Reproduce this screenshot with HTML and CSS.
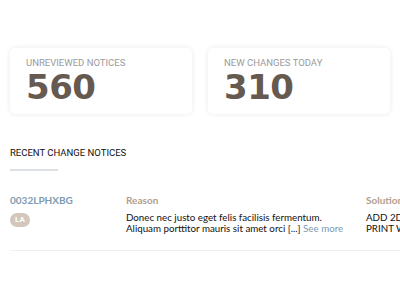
FILE: index.html
```html
<!DOCTYPE html>
<html lang="en">
<head>
    <meta charset="UTF-8">
    <title>Change Notices</title>
    <link rel="stylesheet" href="styles.css">
</head>
<body>
    <div class="page">
        <div class="stats">
            <div class="stat-card">
                <div class="stat-label">UNREVIEWED NOTICES</div>
                <div class="stat-value">560</div>
            </div>
            <div class="stat-card">
                <div class="stat-label">NEW CHANGES TODAY</div>
                <div class="stat-value">310</div>
            </div>
        </div>

        <div class="section">
            <h4 class="section-title">RECENT CHANGE NOTICES</h4>
            <div class="section-bar"></div>
        </div>

        <div class="notice-row">
            <div class="notice-id-col">
                <div class="notice-id">0032LPHXBG</div>
                <span class="badge">LA</span>
            </div>
            <div class="notice-reason">
                <div class="col-head">Reason</div>
                <div class="col-text">Donec nec justo eget felis facilisis fermentum. Aliquam porttitor mauris sit amet orci [...] <span class="see-more">See more</span></div>
            </div>
            <div class="notice-solution">
                <div class="col-head">Solution</div>
                <div class="col-text">ADD 2D PRINT WITH</div>
            </div>
        </div>
    </div>
</body>
</html>
```

FILE: styles.css
```css
* {
    margin: 0;
    padding: 0;
    box-sizing: border-box;
}

body {
    background-color: #ffffff;
    font-family: 'Roboto', 'Liberation Sans', sans-serif;
    overflow: hidden;
    width: 400px;
    height: 300px;
}

.page {
    padding: 48px 0 0 10px;
}

.stats {
    display: flex;
    gap: 16px;
    width: 380px;
}

.stat-card {
    flex: 1;
    height: 66px;
    padding: 9px 16px 0;
    background-color: #fff;
    border-radius: 5px;
    box-shadow: 0px 0px 4px 1px #f0f0f0;
}

.stat-label {
    font-size: 9.5px;
    color: #9a9a9a;
    line-height: 12px;
}

.stat-value {
    font-family: 'DejaVu Sans', 'Liberation Sans', sans-serif;
    font-weight: 700;
    font-size: 34px;
    line-height: 34px;
    letter-spacing: -0.5px;
    color: #66594f;
    margin-top: 1px;
}

.section {
    margin-top: 33px;
}

.section-title {
    font-size: 9.5px;
    font-weight: 400;
    color: #111;
    line-height: 12px;
}

.section-bar {
    width: 48px;
    height: 2px;
    background-color: #dde1e5;
    margin-top: 10px;
}

.notice-row {
    display: flex;
    margin-top: 23px;
    padding-bottom: 16px;
    border-bottom: 1px solid #eef1f1;
    width: 390px;
    overflow: hidden;
}

.notice-id-col {
    width: 116px;
    flex-shrink: 0;
}

.notice-id {
    font-family: 'Lato', 'Liberation Sans', sans-serif;
    font-weight: 700;
    font-size: 10px;
    color: #7d9bb0;
    line-height: 12px;
}

.badge {
    display: inline-block;
    margin-top: 7px;
    width: 20px;
    height: 14px;
    border-radius: 7px;
    background-color: #d3c7bc;
    color: #fff;
    font-size: 8px;
    font-weight: 700;
    line-height: 14px;
    text-align: center;
}

.notice-reason {
    width: 240px;
    flex-shrink: 0;
}

.notice-solution {
    width: 62px;
    flex-shrink: 0;
}

.col-head {
    font-family: 'Lato', 'Liberation Sans', sans-serif;
    font-weight: 700;
    font-size: 10px;
    color: #b39e8b;
    line-height: 12px;
    white-space: nowrap;
}

.col-text {
    font-family: 'Lato', 'Liberation Sans', sans-serif;
    font-size: 9.75px;
    color: #111;
    line-height: 11px;
    margin-top: 6px;
}

.notice-reason .col-text {
    padding-right: 18px;
}

.see-more {
    color: #7d9bb0;
}
```
